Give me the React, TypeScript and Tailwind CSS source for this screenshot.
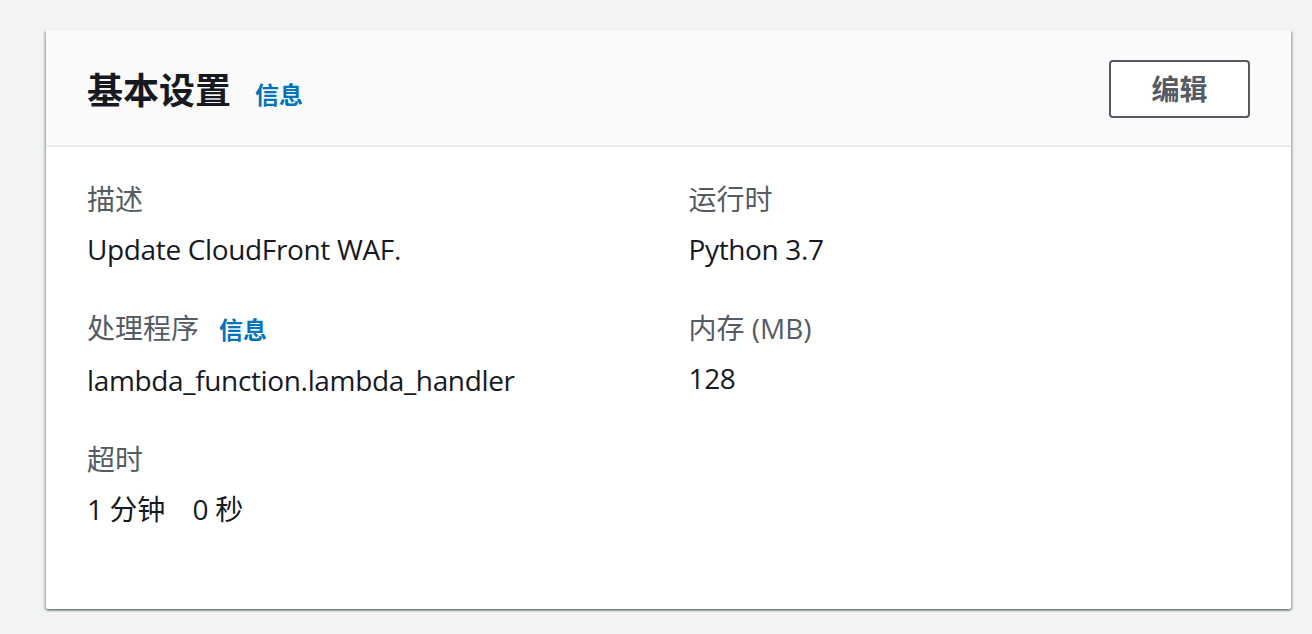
const font = "font-['Open_Sans','Noto_Sans_CJK_SC',sans-serif]";

type Field = { label: string; value: string; info?: boolean };

const fields: Field[] = [
  { label: "描述", value: "Update CloudFront WAF." },
  { label: "运行时", value: "Python 3.7" },
  { label: "处理程序", value: "lambda_function.lambda_handler", info: true },
  { label: "内存 (MB)", value: "128" },
  { label: "超时", value: "1 分钟\u00a0\u00a0\u00a0\u00a00 秒" },
];

function InfoLink({ className = "" }: { className?: string }) {
  return (
    <a href="#" className={`font-bold text-[#0073bb] text-[24px] ${className}`}>
      信息
    </a>
  );
}

export default function App() {
  return (
    <div className={`min-h-[634px] bg-[#f2f3f3] pt-[30px] pl-[46px] pr-[21px] ${font}`}>
      <div className="bg-white rounded-[2px] shadow-[0_2px_2px_0_rgba(0,28,36,0.35),2px_1px_2px_0_rgba(0,28,36,0.2),-2px_1px_2px_0_rgba(0,28,36,0.2)]">
        {/* Header */}
        <div className="flex items-center justify-between h-[117px] px-[41px] bg-[#fafafa] border-b-2 border-[#eaeded]">
          <div className="flex items-baseline gap-[24px] pt-[6px]">
            <h2 className="text-[36px] font-bold text-[#16191f] leading-[44px]">基本设置</h2>
            <InfoLink />
          </div>
          <button
            type="button"
            className="h-[58px] w-[141px] mt-[2px] rounded-[4px] border-2 border-[#545b64] bg-white text-[28px] font-bold text-[#545b64]"
          >
            编辑
          </button>
        </div>

        {/* Body */}
        <div className="grid grid-cols-2 gap-x-[40px] gap-y-[39px] px-[41px] pt-[32px] pb-[80px]">
          {fields.map((f) => (
            <div key={f.label} className="flex flex-col gap-[10px]">
              <div className="flex items-baseline gap-[20px] text-[28px] leading-[40px] text-[#545b64]">
                <span>{f.label}</span>
                {f.info && <InfoLink />}
              </div>
              <div className="text-[28px] leading-[40px] tracking-[-0.35px] text-[#16191f]">{f.value}</div>
            </div>
          ))}
        </div>
      </div>
    </div>
  );
}
